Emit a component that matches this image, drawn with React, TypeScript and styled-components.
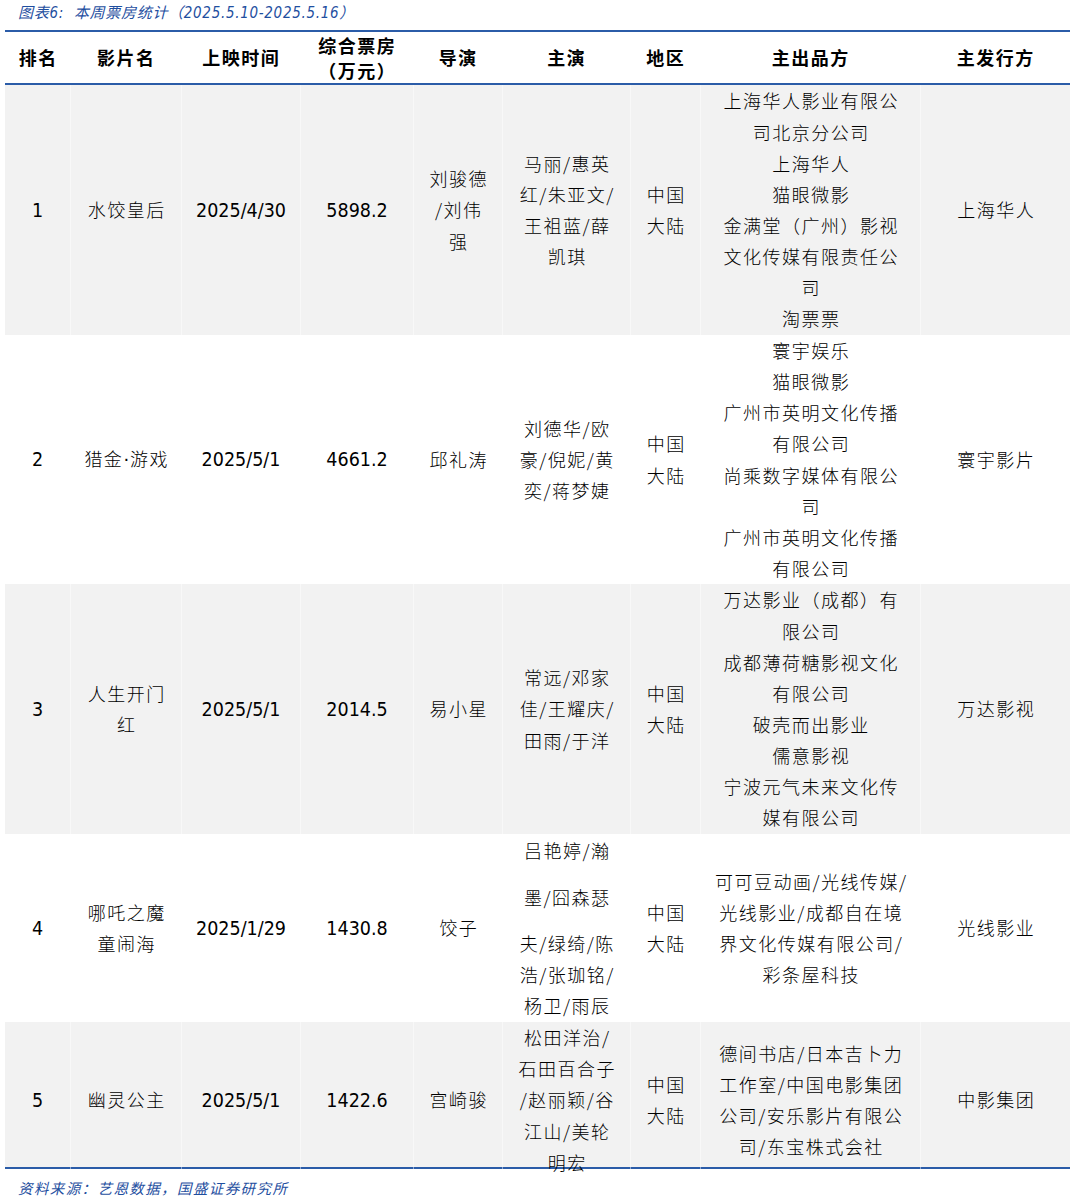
import React from "react";
import styled, { createGlobalStyle } from "styled-components";

const GlobalStyle = createGlobalStyle`
  html, body { margin: 0; padding: 0; background: #ffffff; }
  body { font-family: "Noto Sans CJK SC", sans-serif; color: #000; }
`;

const BLUE = "#2b5ca8";
const COLS = "65px 111px 119px 113px 89px 128px 70px 220px 150px";
const CJK = `"Noto Sans CJK SC", sans-serif`;
const NUM = `"DejaVu Sans Condensed", "DejaVu Sans", "Noto Sans CJK SC", sans-serif`;

const Page = styled.div`
  width: 1075px;
  padding: 0 5px;
  box-sizing: border-box;
`;

const Caption = styled.div`
  height: 26px;
  line-height: 26px;
  margin-bottom: 4px;
  padding-left: 13px;
  font-family: ${NUM};
  font-style: italic;
  font-size: 15px;
  letter-spacing: 0.7px;
  color: #1f4f9f;
  white-space: pre;
`;

const Table = styled.div`
  width: 1065px;
  border-top: 2px solid ${BLUE};
  border-bottom: 2px solid ${BLUE};
`;

const HeaderRow = styled.div`
  display: grid;
  grid-template-columns: ${COLS};
  height: 51px;
  border-bottom: 2px solid ${BLUE};
`;

const HeaderCell = styled.div`
  display: flex;
  flex-direction: column;
  align-items: center;
  justify-content: center;
  font-family: ${CJK};
  font-weight: 700;
  font-size: 18px;
  letter-spacing: 1.5px;
  line-height: 25px;
  text-indent: 1.5px;
  white-space: nowrap;
`;

const Row = styled.div<{ $h: number; $shade: boolean }>`
  display: grid;
  grid-template-columns: ${COLS};
  align-items: start;
  height: ${(p) => p.$h}px;
  background: ${(p) => (p.$shade ? "#f2f2f2" : "#ffffff")};
`;

const Cell = styled.div<{ $ch: number; $num?: boolean }>`
  height: ${(p) => p.$ch}px;
  display: flex;
  flex-direction: column;
  align-items: center;
  justify-content: center;
  border-left: 1px solid rgba(255, 255, 255, 0.45);
  box-sizing: border-box;
  font-family: ${(p) => (p.$num ? NUM : CJK)};
  font-size: ${(p) => (p.$num ? "19.5px" : "18px")};
  font-weight: ${(p) => (p.$num ? 400 : 300)};
  letter-spacing: ${(p) => (p.$num ? "0" : "1.5px")};
  white-space: nowrap;
  &:first-child { border-left: none; }
`;

const Line = styled.div<{ $tall?: boolean }>`
  line-height: ${(p) => (p.$tall ? "62.3px" : "31.15px")};
  padding-left: 1.5px;
`;

const Dot = styled.span`
  font-family: "DejaVu Sans", sans-serif;
  font-weight: 400;
  letter-spacing: 1px;
`;

const Footer = styled.div`
  margin-top: 6px;
  height: 26px;
  line-height: 26px;
  padding-left: 13px;
  font-family: ${CJK};
  font-style: italic;
  font-size: 14.5px;
  letter-spacing: 1.4px;
  color: #1f4f9f;
`;

type Piece = React.ReactNode;
type Lines = (Piece | { t: Piece; tall: boolean })[];

interface Film {
  rank: string;
  name: Lines;
  date: string;
  box: string;
  director: Lines;
  cast: Lines;
  region: Lines;
  producers: Lines;
  distributor: Lines;
  h: number;
  ch: number;
}

const films: Film[] = [
  {
    rank: "1",
    name: ["水饺皇后"],
    date: "2025/4/30",
    box: "5898.2",
    director: ["刘骏德", "/刘伟", "强"],
    cast: ["马丽/惠英", "红/朱亚文/", "王祖蓝/薛", "凯琪"],
    region: ["中国", "大陆"],
    producers: [
      "上海华人影业有限公",
      "司北京分公司",
      "上海华人",
      "猫眼微影",
      "金满堂（广州）影视",
      "文化传媒有限责任公",
      "司",
      "淘票票",
    ],
    distributor: ["上海华人"],
    h: 250,
    ch: 250,
  },
  {
    rank: "2",
    name: [
      <>
        猎金<Dot>·</Dot>游戏
      </>,
    ],
    date: "2025/5/1",
    box: "4661.2",
    director: ["邱礼涛"],
    cast: ["刘德华/欧", "豪/倪妮/黄", "奕/蒋梦婕"],
    region: ["中国", "大陆"],
    producers: [
      "寰宇娱乐",
      "猫眼微影",
      "广州市英明文化传播",
      "有限公司",
      "尚乘数字媒体有限公",
      "司",
      "广州市英明文化传播",
      "有限公司",
    ],
    distributor: ["寰宇影片"],
    h: 249,
    ch: 249,
  },
  {
    rank: "3",
    name: ["人生开门", "红"],
    date: "2025/5/1",
    box: "2014.5",
    director: ["易小星"],
    cast: ["常远/邓家", "佳/王耀庆/", "田雨/于洋"],
    region: ["中国", "大陆"],
    producers: [
      "万达影业（成都）有",
      "限公司",
      "成都薄荷糖影视文化",
      "有限公司",
      "破壳而出影业",
      "儒意影视",
      "宁波元气未来文化传",
      "媒有限公司",
    ],
    distributor: ["万达影视"],
    h: 250,
    ch: 250,
  },
  {
    rank: "4",
    name: ["哪吒之魔", "童闹海"],
    date: "2025/1/29",
    box: "1430.8",
    director: ["饺子"],
    cast: [
      "吕艳婷/瀚",
      { t: "墨/囧森瑟", tall: true },
      "夫/绿绮/陈",
      "浩/张珈铭/",
      "杨卫/雨辰",
    ],
    region: ["中国", "大陆"],
    producers: [
      "可可豆动画/光线传媒/",
      "光线影业/成都自在境",
      "界文化传媒有限公司/",
      "彩条屋科技",
    ],
    distributor: ["光线影业"],
    h: 188,
    ch: 188,
  },
  {
    rank: "5",
    name: ["幽灵公主"],
    date: "2025/5/1",
    box: "1422.6",
    director: ["宫崎骏"],
    cast: ["松田洋治/", "石田百合子", "/赵丽颖/谷", "江山/美轮", "明宏"],
    region: ["中国", "大陆"],
    producers: [
      "德间书店/日本吉卜力",
      "工作室/中国电影集团",
      "公司/安乐影片有限公",
      "司/东宝株式会社",
    ],
    distributor: ["中影集团"],
    h: 145,
    ch: 156,
  },
];

const isTall = (l: unknown): l is { t: Piece; tall: boolean } =>
  typeof l === "object" && l !== null && "tall" in (l as object);

const renderLines = (lines: Lines) =>
  lines.map((l, i) =>
    isTall(l) ? (
      <Line key={i} $tall={l.tall}>
        {l.t}
      </Line>
    ) : (
      <Line key={i}>{l as Piece}</Line>
    )
  );

export default function App() {
  return (
    <>
      <GlobalStyle />
      <Page>
        <Caption>{"图表6:  本周票房统计（2025.5.10-2025.5.16）"}</Caption>
        <Table>
          <HeaderRow>
            <HeaderCell>排名</HeaderCell>
            <HeaderCell>影片名</HeaderCell>
            <HeaderCell>上映时间</HeaderCell>
            <HeaderCell>
              <div>综合票房</div>
              <div>（万元）</div>
            </HeaderCell>
            <HeaderCell>导演</HeaderCell>
            <HeaderCell>主演</HeaderCell>
            <HeaderCell>地区</HeaderCell>
            <HeaderCell>主出品方</HeaderCell>
            <HeaderCell>主发行方</HeaderCell>
          </HeaderRow>
          {films.map((f, i) => (
            <Row key={f.rank} $h={f.h} $shade={i % 2 === 0}>
              <Cell $ch={f.ch} $num>
                {f.rank}
              </Cell>
              <Cell $ch={f.ch}>{renderLines(f.name)}</Cell>
              <Cell $ch={f.ch} $num>
                {f.date}
              </Cell>
              <Cell $ch={f.ch} $num>
                {f.box}
              </Cell>
              <Cell $ch={f.ch}>{renderLines(f.director)}</Cell>
              <Cell $ch={f.ch}>{renderLines(f.cast)}</Cell>
              <Cell $ch={f.ch}>{renderLines(f.region)}</Cell>
              <Cell $ch={f.ch}>{renderLines(f.producers)}</Cell>
              <Cell $ch={f.ch}>{renderLines(f.distributor)}</Cell>
            </Row>
          ))}
        </Table>
        <Footer>资料来源：艺恩数据，国盛证券研究所</Footer>
      </Page>
    </>
  );
}
